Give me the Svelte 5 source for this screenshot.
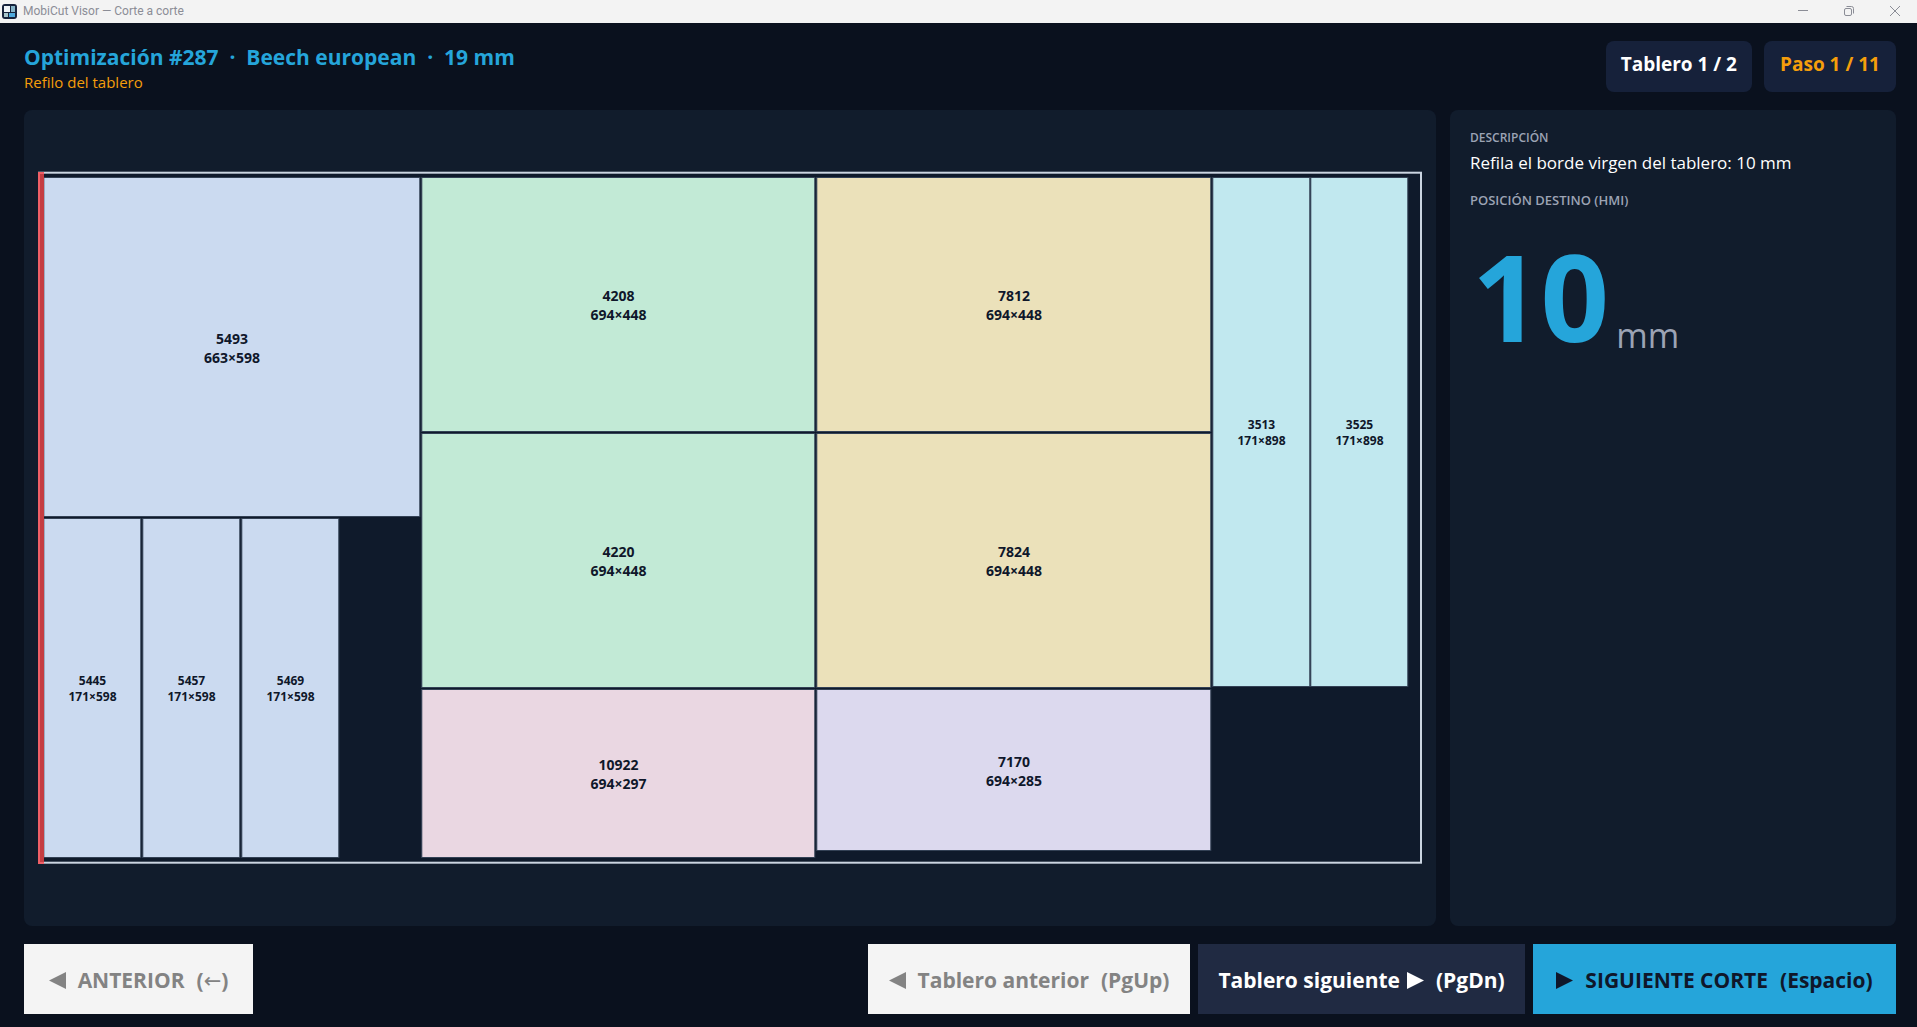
<script>
  const board = { width: 1384, height: 692 };

  const pieces = [
    { id: '5493', size: '663×598', x: 6, y: 5, w: 376, h: 339, tone: 'blue' },
    { id: '5445', size: '171×598', x: 6, y: 346, w: 97, h: 339, tone: 'blue', small: true },
    { id: '5457', size: '171×598', x: 105, y: 346, w: 97, h: 339, tone: 'blue', small: true },
    { id: '5469', size: '171×598', x: 204, y: 346, w: 97, h: 339, tone: 'blue', small: true },
    { id: '4208', size: '694×448', x: 384, y: 5, w: 393, h: 254, tone: 'green' },
    { id: '4220', size: '694×448', x: 384, y: 261, w: 393, h: 254, tone: 'green' },
    { id: '10922', size: '694×297', x: 384, y: 517, w: 393, h: 168, tone: 'pink' },
    { id: '7812', size: '694×448', x: 779, y: 5, w: 394, h: 254, tone: 'sand' },
    { id: '7824', size: '694×448', x: 779, y: 261, w: 394, h: 254, tone: 'sand' },
    { id: '7170', size: '694×285', x: 779, y: 517, w: 394, h: 161, tone: 'violet' },
    { id: '3513', size: '171×898', x: 1175, y: 5, w: 97, h: 509, tone: 'cyan', small: true },
    { id: '3525', size: '171×898', x: 1273, y: 5, w: 97, h: 509, tone: 'cyan', small: true }
  ];
</script>

<div class="window">
  <div class="titlebar">
    <svg class="app-icon" viewBox="0 0 15 15" aria-hidden="true">
      <rect x="0" y="0" width="15" height="15" rx="3" fill="#17233c" />
      <rect x="2" y="2" width="6" height="6" fill="#eef3f7" />
      <rect x="9" y="2" width="4" height="6" fill="#86b4c8" />
      <rect x="2" y="9" width="4" height="4" fill="#a9c6cc" />
      <rect x="7" y="9" width="6" height="4" fill="#4fa9dc" />
    </svg>
    <span class="app-name">MobiCut Visor — Corte a corte</span>
    <div class="controls">
      <button aria-label="Minimizar"><svg viewBox="0 0 12 12"><path d="M1 5.500H11" /></svg></button>
      <button aria-label="Restaurar">
        <svg viewBox="0 0 12 12"><rect x="1.500" y="3.500" width="7" height="7" rx="1.500" /><path d="M3.500 1.500H8.500Q10.500 1.500 10.500 3.500V8.500" /></svg>
      </button>
      <button aria-label="Cerrar"><svg viewBox="0 0 12 12"><path d="M1 1L11 11M11 1L1 11" /></svg></button>
    </div>
  </div>

  <main>
    <header>
      <div class="heading">
        <h1>Optimización #287  ·  Beech european  ·  19 mm</h1>
        <p>Refilo del tablero</p>
      </div>
      <div class="pill">Tablero 1 / 2</div>
      <div class="pill step">Paso 1 / 11</div>
    </header>

    <div class="content">
      <section class="panel plan">
        <svg viewBox="0 0 {board.width} {board.height}" role="img" aria-label="Plano de corte">
          <rect class="board" x="1" y="0.700" width="1382" height="690" />
          {#each pieces as p}
            <rect class="piece {p.tone}" x={p.x - 0.2} y={p.y + 0.5} width={p.w} height={p.h} />
            <text class:small={p.small} x={p.x + p.w / 2} y={p.y + p.h / 2 - 3}>{p.id}</text>
            <text class:small={p.small} x={p.x + p.w / 2} y={p.y + p.h / 2 + (p.small ? 13 : 16)}>{p.size}</text>
          {/each}
          <rect class="trim" x="1" y="1" width="5" height="690" />
          <path class="trim-edge" d="M6 1H1V691H6" />
        </svg>
      </section>

      <aside class="panel info">
        <h2>DESCRIPCIÓN</h2>
        <p class="description">Refila el borde virgen del tablero: 10 mm</p>
        <h2 class="target-title">POSICIÓN DESTINO (HMI)</h2>
        <div class="target"><strong>10</strong><span>mm</span></div>
      </aside>
    </div>

    <footer>
      <button class="action prev" disabled>
        <svg viewBox="0 0 17 17"><path d="M17 0V17L0 8.500Z" /></svg><span>ANTERIOR</span><span>(<i>←</i>)</span>
      </button>
      <button class="action board-prev" disabled>
        <svg viewBox="0 0 17 17"><path d="M17 0V17L0 8.500Z" /></svg><span>Tablero anterior</span><span>(PgUp)</span>
      </button>
      <button class="action board-next">
        <span class="label">Tablero siguiente<svg viewBox="0 0 17 17"><path d="M0 0V17L17 8.500Z" /></svg></span><span>(PgDn)</span>
      </button>
      <button class="action next">
        <svg viewBox="0 0 17 17"><path d="M0 0V17L17 8.500Z" /></svg><span>SIGUIENTE CORTE</span><span>(Espacio)</span>
      </button>
    </footer>
  </main>
</div>

<style>
  :global(body) { margin: 0; background: #0a111e; }
  .window {
    box-sizing: border-box;
    min-height: 100vh;
    display: flex;
    flex-direction: column;
    font-family: "Segoe UI", "Open Sans", "Noto Sans", sans-serif;
    color: #fff;
    background: #0a111e;
  }
  h1, h2, p { margin: 0; }
  button { font: inherit; border: 0; padding: 0; }
  .titlebar {
    display: flex;
    align-items: center;
    height: 23px;
    padding: 0 16px 0 2px;
    background: #f3f3f3;
    color: #8b8d96;
    font-family: "Segoe UI", Roboto, sans-serif;
    font-size: 12px;
  }
  .app-icon { width: 15px; height: 15px; margin-right: 6px; }
  .app-name { flex: 1; line-height: 23px; }
  .controls { display: flex; gap: 34px; margin-bottom: 2px; }
  .controls button { display: flex; background: none; }
  .controls svg { width: 12px; height: 12px; fill: none; stroke: #8b8d96; }

  main {
    flex: 1;
    display: flex;
    flex-direction: column;
    padding: 18px 21px 13px 24px;
  }
  header { display: flex; align-items: flex-start; gap: 12px; margin-bottom: 18px; }
  .heading { flex: 1; }
  h1 { font-size: 21px; line-height: 32px; font-weight: 700; color: #25a5da; white-space: pre; }
  .heading p { font-size: 15px; line-height: 18px; color: #f59e0b; }
  .pill {
    box-sizing: border-box;
    min-width: 132px;
    height: 51px;
    padding: 8px 15px 13px;
    border-radius: 8px;
    background: #16213a;
    font-size: 19px;
    line-height: 30px;
    font-weight: 700;
    text-align: center;
    white-space: pre;
  }
  .step { color: #f59e0b; }

  .content { flex: 1; display: flex; gap: 14px; }
  .panel { box-sizing: border-box; border-radius: 8px; background: #111c2c; }
  .plan { flex: 1; min-width: 0; display: flex; align-items: center; padding: 14px; }
  .plan svg { display: block; width: 100%; overflow: visible; }
  .board { fill: #0f1a2b; stroke: #cbd5e1; stroke-width: 2; }
  .piece { stroke: #334155; stroke-width: 1; }
  .blue { fill: #cbdaf0; }
  .green { fill: #c2ead6; }
  .pink { fill: #ead7e2; }
  .sand { fill: #ebe1ba; }
  .violet { fill: #dcd9ee; }
  .cyan { fill: #c1e8ef; }
  .trim { fill: #c53d42; }
  .trim-edge { fill: none; stroke: #ef5f66; stroke-width: 2; }
  text { font-size: 14px; font-weight: 700; fill: #0f172a; text-anchor: middle; }
  text.small { font-size: 12px; }

  .info { width: 446px; padding: 20px; }
  h2 { font-size: 12px; line-height: 16px; font-weight: 600; color: #9ca3b4; }
  .target-title { font-size: 13px; }
  .description { margin: 5px 0 17px; font-size: 17px; line-height: 24px; }
  .target { display: flex; align-items: flex-end; gap: 7px; margin-top: 6px; padding-left: 2px; }
  .target strong { font-size: 120px; line-height: 164px; font-weight: 700; color: #25a5da; }
  .target span { font-size: 34px; line-height: 86px; color: #9ca3b4; }

  footer { display: flex; gap: 8px; margin-top: 18px; }
  .action {
    box-sizing: border-box;
    display: flex;
    align-items: center;
    justify-content: center;
    gap: 12px;
    height: 70px;
    padding-top: 2px;
    font-size: 21px;
    line-height: 28px;
    font-weight: 700;
    white-space: nowrap;
  }
  .action svg { width: 17px; height: 17px; fill: currentColor; }
  .action i { font: 400 21px/20px "DejaVu Sans", sans-serif; }
  .action:disabled { background: #f4f4f4; color: #838383; }
  .label { display: flex; align-items: center; gap: 7px; }
  .prev { min-width: 229px; margin-right: auto; }
  .board-prev { min-width: 322px; }
  .board-next { min-width: 327px; background: #202a42; color: #fff; }
  .next { min-width: 363px; background: #25a5da; color: #0f172a; }
</style>
